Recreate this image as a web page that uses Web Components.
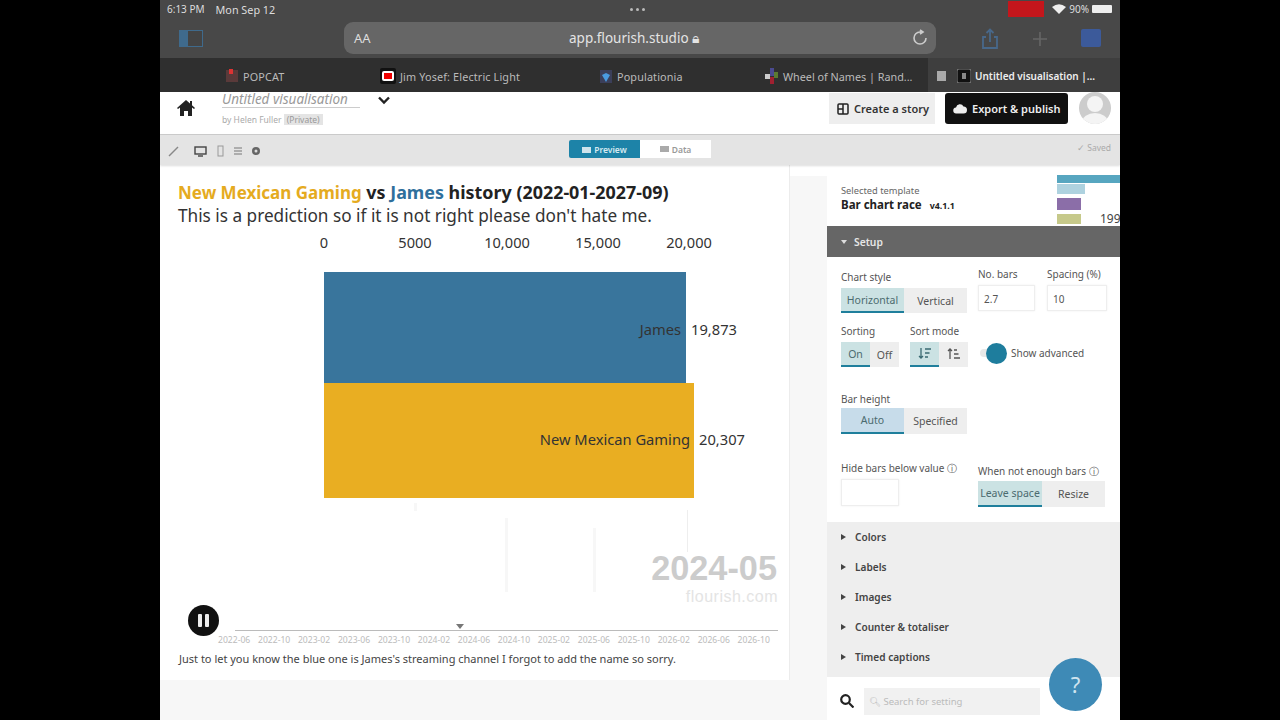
<!DOCTYPE html>
<html><head><meta charset="utf-8">
<style>
html,body{margin:0;padding:0;background:#000;height:720px;overflow:hidden}
body{font-family:"Noto Sans","Liberation Sans",sans-serif}
</style></head><body>
<x-app></x-app>
<script>
function def(name,html){customElements.define(name,class extends HTMLElement{constructor(){super();this.attachShadow({mode:'open'}).innerHTML=html}})}
const F='"Noto Sans","Liberation Sans",sans-serif';
const L='"Liberation Sans",sans-serif';
def('x-status',`<style>:host{display:flex;align-items:center;height:18px;background:#484848;color:#ddd;font:10px ${F};padding:0 8px 0 7px;position:relative}
.m{position:absolute;left:470px;top:8px;display:flex;gap:3px}.m i{width:3px;height:3px;border-radius:50%;background:#bbb}
.s{width:11px}.g{flex:1}.rec{width:36px;height:16px;background:#c4161c;margin-right:8px}
.bat{width:20px;height:8px;background:#eee;margin-left:3px;border-radius:1px}svg{margin-right:3px}.d{font-size:10.800px}</style>
<span>6:13 PM</span><span class="s"></span><span class="d">Mon Sep 12</span><span class="m"><i></i><i></i><i></i></span><span class="g"></span><span class="rec"></span>
<svg width="14" height="10" viewBox="0 0 14 10"><path d="M7 10 0 3q7-5.500 14 0z" fill="#eee"/></svg><span>90%</span><span class="bat"></span>`);
def('x-nav',`<style>:host{display:flex;align-items:center;height:40px;background:#484848;position:relative}
.side{margin-left:19px;width:24px;height:17px;border:1.500px solid #3f6a8c;box-sizing:border-box;background:linear-gradient(90deg,#3f6a8c 8px,#444 8px)}
.url{position:absolute;left:184px;top:4px;width:592px;height:32px;background:#666;border-radius:9px;display:flex;align-items:center;color:#ddd;font:14px ${F}}
.aa{margin-left:10px;font-size:13px}.t{position:absolute;left:225px;font-size:13.500px;color:#e4e4e4}
.ico{position:absolute;top:10px}</style>
<span class="side"></span>
<span class="url"><span class="aa">AA</span><span class="t">app.flourish.studio 🔒︎</span>
<svg style="position:absolute;right:8px;top:7px" width="16" height="18" viewBox="0 0 16 18" fill="none" stroke="#ccc" stroke-width="1.600"><path d="M8 3a6 6 0 1 0 6 6"/><path d="M8 1l3 2-3 2" fill="#ccc"/></svg></span>
<svg class="ico" style="left:820px" width="20" height="22" viewBox="0 0 20 22" fill="none" stroke="#48688a" stroke-width="1.800"><path d="M6 9H3v11h14V9h-3M10 14V2M6.500 5 10 1.500 13.500 5"/></svg>
<svg class="ico" style="left:873px;top:14px" width="14" height="14" viewBox="0 0 14 14" stroke="#666" stroke-width="1.600"><path d="M7 0v14M0 7h14"/></svg>
<svg class="ico" style="left:921px;top:11px" width="20" height="18"><rect width="20" height="18" rx="2" fill="#3c5a9a"/></svg>`);
def('x-tab',`<style>:host{display:flex;align-items:center;gap:4px;box-sizing:border-box;min-width:0;height:34px;padding-top:2px;color:#bbb;font:10.800px ${F};white-space:nowrap;letter-spacing:.15px}
:host([active]){background:#3e3e3e;color:#eee;font-weight:600;letter-spacing:0;font-size:10px}
::slotted(svg){flex:none}</style><slot></slot>`);
def('x-tabs',`<style>:host{display:flex;height:34px;background:#2f2f2f}</style><slot></slot>`);
def('x-header',`<style>:host{display:flex;align-items:flex-start;height:43px;background:#fff;position:relative;box-sizing:border-box;border-bottom:1px solid #ccc}
.home{margin:8px 0 0 17px;flex:none}.tt{margin-left:27px;display:flex;flex-direction:column}
.name{font:italic 13.500px/15px ${F};color:#999;border-bottom:1px solid #ccc;width:138px;white-space:nowrap}
.by{font:8.500px ${F};color:#aaa;margin-top:6px}.by b{background:#e4e4e4;color:#999;padding:0 3px;font-weight:400}
.ch{margin:4px 0 0 18px}
.g{flex:1}.btn{display:flex;align-items:center;gap:5px;height:31px;margin-top:1px;box-sizing:border-box;font:600 11px ${F};padding:0 6px 0 8px}
.story{background:#eee;color:#333;width:106px;margin-right:10px}.exp{background:#111;color:#eee;width:123px;border-radius:3px;margin-right:11px;padding-left:8px}
.av{width:32px;height:32px;border-radius:50%;background:#ccc;margin-right:9px;overflow:hidden}</style>
<svg class="home" width="18" height="16" viewBox="0 0 18 16" fill="#222"><path d="M9 0 0 8l1 1 2-1.500V16h4v-5h4v5h4V7.500L17 9l1-1-3-2.700V1h-2v2.500z"/></svg>
<div class="tt"><div class="name">Untitled visualisation</div><div class="by">by Helen Fuller <b>(Private)</b></div></div>
<svg class="ch" width="12" height="9" viewBox="0 0 12 9" fill="none" stroke="#222" stroke-width="2.400"><path d="M1 1.500 6 6.500 11 1.500"/></svg>
<span class="g"></span>
<div class="btn story"><svg width="12" height="12" viewBox="0 0 12 12" fill="none" stroke="#222" stroke-width="1.500"><rect x="1" y="1" width="10" height="10" rx="1"/><path d="M6 1v10M1 6h5"/></svg>Create a story</div>
<div class="btn exp"><svg width="14" height="11" viewBox="0 0 14 11" fill="#eee"><path d="M3.500 10.500a3 3 0 0 1-.5-6 4 4 0 0 1 7.500-1 3.500 3.500 0 0 1 0 7z"/></svg>Export &amp; publish</div>
<div class="av"><svg width="32" height="32" viewBox="0 0 32 32"><circle cx="16" cy="12" r="8" fill="#f4f4f4"/><ellipse cx="16" cy="30" rx="13" ry="9" fill="#f4f4f4"/></svg></div>`);
def('x-toolbar',`<style>:host{display:flex;align-items:center;height:30px;background:#e4e4e4;position:relative;box-shadow:0 1px 2px #0002;font:9px ${F};color:#888;z-index:1}
.ic{display:flex;gap:9px;align-items:center;margin:2px 0 0 8px;color:#555}
.tabs{position:absolute;left:409px;top:5px;display:flex;height:18px}
.tb{width:71px;display:flex;align-items:center;justify-content:center;gap:3px;font:600 8.500px ${F};background:#1d83a8;color:#d6eaf1;border-radius:2px 0 0 2px}
.tb+.tb{background:#fff;color:#999;border-radius:0}
.rv{position:absolute;right:9px;top:7px;color:#aaa;font-size:8.500px}</style>
<div class="ic"><svg width="12" height="12" viewBox="0 0 12 12" stroke="#888" stroke-width="1.500"><path d="M1 11 10 2"/></svg>
<svg style="margin-left:5px" width="13" height="11" viewBox="0 0 13 11" fill="none" stroke="#444" stroke-width="1.400"><rect x="1" y="1" width="11" height="7"/><path d="M4 10h5"/></svg>
<svg width="9" height="12" viewBox="0 0 9 12" fill="none" stroke="#999"><rect x="2" y="1" width="5" height="10"/></svg>
<svg width="8" height="12" viewBox="0 0 8 12" fill="none" stroke="#777"><path d="M0 3h8M0 6h8M0 9h8"/></svg>
<svg width="10" height="10" viewBox="0 0 10 10"><circle cx="5" cy="5" r="4" fill="#666"/><circle cx="5" cy="5" r="1.500" fill="#ddd"/></svg></div>
<div class="tabs"><div class="tb"><svg width="9" height="8"><rect y="2" width="9" height="6" fill="#cfe4ec"/></svg>Preview</div><div class="tb"><svg width="9" height="8"><rect y="1" width="9" height="6" fill="#aaa"/></svg>Data</div></div>
<div class="rv">✓ Saved</div>`);
def('x-chart',`<style>:host{display:block;width:630px;height:515px;background:#fff;position:relative;box-sizing:border-box;border-right:1px solid #ececec;color:#333;font-family:${F}}
.head{padding:15px 0 0 18px;white-space:nowrap}
h1{margin:0;font:700 17.900px/24px ${F};color:#222}.y{color:#e5ab1f;font-size:17px}.b{color:#2f6f9c}
p{margin:0;font:17.200px/22px ${F};color:#333}
.ax{position:absolute;top:67px;transform:translateX(-50%);font-size:14.600px;line-height:20px;color:#333}
.bar{position:absolute;left:164px}
.lab{position:absolute;font-size:14.700px;line-height:20px;white-space:nowrap;color:#333}
.tick{position:absolute;width:3px;background:#f7f7f7}
.yr{position:absolute;right:12px;top:383px;font:700 34.300px/40px ${L};color:#ccc}
.cr{position:absolute;right:11px;top:423px;font:16px/18px ${L};letter-spacing:.5px;color:#e4e4e4}
.pause{position:absolute;left:28px;top:440px;width:31px;height:31px;border-radius:50%;background:#111;display:flex;align-items:center;justify-content:center;gap:3px}
.pause i{width:4px;height:13px;background:#eee;border-radius:1px}
.line{position:absolute;left:75px;right:11px;top:465px;height:1px;background:#bbb}
.mk{position:absolute;left:296px;top:459px;width:0;height:0;border:4px solid transparent;border-top:5px solid #777}
.tl{position:absolute;left:58px;width:552px;top:470px;display:flex;justify-content:space-between;font-size:8.600px;color:#bbb;line-height:10px}
.note{position:absolute;left:19px;top:485px;font:11px/18px ${F};color:#444;white-space:nowrap}</style>
<div class="head"><h1><span class="y">New Mexican Gaming</span> vs <span class="b">James</span> history (2022-01-2027-09)</h1><p>This is a prediction so if it is not right please don't hate me.</p></div>
<span class="ax" style="left:164px">0</span><span class="ax" style="left:255px">5000</span><span class="ax" style="left:347px">10,000</span><span class="ax" style="left:438px">15,000</span><span class="ax" style="left:529px">20,000</span>
<i class="tick" style="left:254px;top:338px;height:8px"></i><i class="tick" style="left:345px;top:353px;height:74px"></i><i class="tick" style="left:433px;top:363px;height:64px"></i><i class="tick" style="left:527px;top:345px;height:42px;width:1px;background:#eee"></i>
<div class="bar" style="top:107px;width:362px;height:116px;background:#39759c"></div>
<div class="bar" style="top:218px;width:370px;height:115px;background:#e9ae22"></div>
<span class="lab" style="right:108px;top:154px">James</span><span class="lab" style="left:531px;top:154px">19,873</span>
<span class="lab" style="right:99px;top:264px">New Mexican Gaming</span><span class="lab" style="left:539px;top:264px">20,307</span>
<div class="yr">2024-05</div><div class="cr">flourish.com</div>
<div class="pause"><i></i><i></i></div><div class="line"></div><div class="mk"></div>
<div class="tl">${['2022-06','2022-10','2023-02','2023-06','2023-10','2024-02','2024-06','2024-10','2025-02','2025-06','2025-10','2026-02','2026-06','2026-10'].map(s=>`<span>${s}</span>`).join('')}</div>
<div class="note">Just to let you know the blue one is James's streaming channel I forgot to add the name so sorry.</div>`);
def('x-seg',`<style>:host{display:inline-flex;height:25px;background:#eee;font:10.500px ${F};color:#555}
::slotted(span){display:flex;align-items:center;justify-content:center;box-sizing:border-box;height:100%}</style><slot></slot>`);
def('x-acc',`<style>:host{display:flex;align-items:center;height:30px;padding-left:14px;gap:9px;font:600 10.100px ${F};color:#444}
i{width:0;height:0;border-left:5px solid #444;border-top:3.500px solid transparent;border-bottom:3.500px solid transparent}</style><i></i><slot></slot>`);
def('x-side',`<style>:host{display:flex;flex-direction:column;width:293px;height:555px;background:#fff;position:relative;font-family:${F};color:#555;overflow:hidden}
.tpl{height:61px;position:relative;flex:none;box-sizing:border-box;padding:19px 0 0 14px}
.sm{font-size:9.300px;line-height:13px;color:#666}.nm{font:700 11.500px/16px ${F};color:#222;white-space:nowrap}.nm small{font-size:8.800px;margin-left:5px}
.th{position:absolute;left:228px;top:10px;width:65px;height:50px;font:12px ${F};color:#444}
.th i{position:absolute;display:block}
.setup{height:31px;flex:none;box-sizing:border-box;padding:1px 0 0 14px;background:#666;color:#e6e6e6;display:flex;align-items:center;gap:7px;font:600 10.300px ${F}}
.setup i{width:0;height:0;border-top:4px solid #ddd;border-left:3.500px solid transparent;border-right:3.500px solid transparent}
.form{flex:1;display:grid;grid-template-columns:58px 11px 58px 10px 57px 12px 60px;padding:0 0 0 14px;align-content:start;position:relative}
.f{font-size:10px;line-height:13px;color:#555;white-space:nowrap}
.on{background:#cbe2e3;color:#4b6b6f;border-bottom:2px solid #1f7f9c}
.inp{display:block;background:#fff;border:1px solid #eee;box-shadow:0 0 2px #0001;box-sizing:border-box;font-size:10px;color:#555;padding:6px 0 0 5px}
.tog{display:flex;align-items:center;font-size:10px;white-space:nowrap;padding-left:2px}
.track{width:26px;height:8px;background:#e8e8e8;border-radius:4px;position:relative;margin-right:5px}
.track i{position:absolute;right:-1px;top:-6px;width:21px;height:21px;border-radius:50%;background:#1e7d9d}
.acc{flex:none;background:#eee;height:155px}
.search{flex:none;height:43px;box-sizing:border-box;padding:5px 0 0 13px;display:flex;align-items:center;gap:10px;background:#fff}
.sb{width:176px;height:27px;background:#f1f1f1;font-size:9.500px;color:#bbb;display:flex;align-items:center;padding-left:5px;box-sizing:border-box;white-space:nowrap}
.help{position:absolute;left:222px;top:493px;width:53px;height:53px;border-radius:50%;background:#3e8ab6;color:#cfe4ef;font:22px/53px ${F};text-align:center}
</style>
<div class="tpl"><div class="sm">Selected template</div><div class="nm">Bar chart race <small>v4.1.1</small></div>
<div class="th"><i style="left:2px;top:0;width:63px;height:8px;background:#57a6c0"></i><i style="left:2px;top:9px;width:28px;height:10px;background:#aed2df"></i><i style="left:2px;top:23px;width:24px;height:12px;background:#8b6ea8"></i><i style="left:2px;top:39px;width:24px;height:10px;background:#c6c98a"></i><span style="position:absolute;left:45px;top:35px">199</span></div></div>
<div class="setup"><i></i>Setup</div>
<div class="form">
 <div class="f" style="grid-column:1/4;grid-row:1;margin-top:14px">Chart style</div>
 <div class="f" style="grid-column:5;grid-row:1;margin-top:11px">No. bars</div>
 <div class="f" style="grid-column:7;grid-row:1;margin-top:11px">Spacing (%)</div>
 <x-seg style="grid-column:1/4;grid-row:2;margin-top:4px;height:25px;width:126px"><span class="on" style="width:63px">Horizontal</span><span style="width:63px">Vertical</span></x-seg>
 <div class="inp" style="grid-column:5;grid-row:2;margin-top:1px;height:26px;">2.7</div>
 <div class="inp" style="grid-column:7;grid-row:2;margin-top:1px;height:26px;">10</div>
 <div class="f" style="grid-column:1;grid-row:3;margin-top:12px">Sorting</div>
 <div class="f" style="grid-column:3;grid-row:3;margin-top:12px">Sort mode</div>
 <x-seg style="grid-column:1;grid-row:4;margin-top:4px"><span class="on" style="width:29px">On</span><span style="width:29px">Off</span></x-seg>
 <x-seg style="grid-column:3;grid-row:4;margin-top:4px"><span class="on" style="width:29px"><svg width="13" height="13" viewBox="0 0 13 13" fill="none" stroke="#3a6a72" stroke-width="1.300"><path d="M3 1v10M1 9l2 2 2-2M7 2h6M7 6h4.500M7 10h3"/></svg></span><span style="width:29px"><svg width="13" height="13" viewBox="0 0 13 13" fill="none" stroke="#555" stroke-width="1.300"><path d="M3 1v10M1 3l2-2 2 2M7 2h3M7 6h4.500M7 10h6"/></svg></span></x-seg>
 <div class="tog" style="grid-column:5/8;grid-row:4;margin:0"><span class="track"><i></i></span>Show advanced</div>
 <div class="f" style="grid-column:1/4;grid-row:5;margin-top:26px">Bar height</div>
 <x-seg style="grid-column:1/4;grid-row:6;margin-top:2px;width:126px;height:26px"><span class="on" style="width:63px;background:#c7dcea">Auto</span><span style="width:63px">Specified</span></x-seg>
 <div class="f" style="grid-column:1/5;grid-row:7;margin-top:28px;">Hide bars below value ⓘ</div>
 <div class="f" style="grid-column:5/8;grid-row:7;margin-top:31px">When not enough bars ⓘ</div>
 <div class="inp" style="grid-column:1;grid-row:8;margin-top:1px;height:27px"></div>
 <x-seg style="grid-column:5/8;grid-row:8;margin-top:3px;width:127px;height:26px"><span class="on" style="width:64px">Leave space</span><span style="width:63px">Resize</span></x-seg>
</div>
<div class="acc"><x-acc>Colors</x-acc><x-acc>Labels</x-acc><x-acc>Images</x-acc><x-acc>Counter &amp; totaliser</x-acc><x-acc>Timed captions</x-acc></div>
<div class="search"><svg width="14" height="14" viewBox="0 0 14 14" fill="none" stroke="#222" stroke-width="2.200"><circle cx="5.500" cy="5.500" r="4.300"/><path d="M9 9l4.500 4.500"/></svg><div class="sb">🔍︎ Search for setting</div></div>
<div class="help">?</div>`);
def('x-app',`<style>:host{display:block;width:960px;height:720px;margin-left:160px;background:#fff;overflow:hidden}
.main{display:flex;background:linear-gradient(#fff 11px,#f7f7f7 11px);height:555px}.l{width:667px;flex:none}</style>
<x-status></x-status><x-nav></x-nav>
<x-tabs>
<x-tab style="flex:0 0 208px;padding-left:66px;gap:5px"><svg width="12" height="14"><rect y="1" width="12" height="12" fill="#5a3a3a"/><rect x="3" width="4" height="5" fill="#d33"/></svg>POPCAT</x-tab>
<x-tab style="flex:0 0 190px;padding-left:12px"><svg width="16" height="16"><rect width="16" height="16" rx="2" fill="#111"/><rect x="2" y="3" width="12" height="10" rx="2" fill="#fff"/><rect x="4" y="5" width="8" height="6" fill="#e00"/></svg>Jim Yosef: Electric Light</x-tab>
<x-tab style="flex:0 0 165px;padding-left:42px;gap:5px"><svg width="12" height="13"><rect width="12" height="13" fill="#3b3f5a"/><path d="M2 5 6 3 10 5 6 12z" fill="#4a9be0"/></svg>Populationia</x-tab>
<x-tab style="flex:0 0 205px;padding-left:42px;letter-spacing:0"><svg width="14" height="16"><rect x="0" y="6" width="5" height="5" fill="#ccc"/><rect x="5" width="4" height="8" fill="#4a4a90"/><rect x="5" y="9" width="4" height="7" fill="#a02030"/><rect x="9" y="4" width="4" height="6" fill="#5a7a30"/></svg>Wheel of Names | Rand...</x-tab>
<x-tab active style="flex:1;padding-left:9px;gap:11px"><svg width="9" height="10"><rect width="9" height="10" fill="#aaa"/></svg><svg style="margin-right:-7px" width="14" height="14"><rect width="14" height="14" rx="2" fill="#111" stroke="#888"/><rect x="5" y="4" width="4" height="6" fill="#888"/></svg>Untitled visualisation |...</x-tab>
</x-tabs>
<x-header></x-header><x-toolbar></x-toolbar>
<div class="main"><div class="l"><x-chart></x-chart></div><x-side></x-side></div>`);
</script></body></html>
